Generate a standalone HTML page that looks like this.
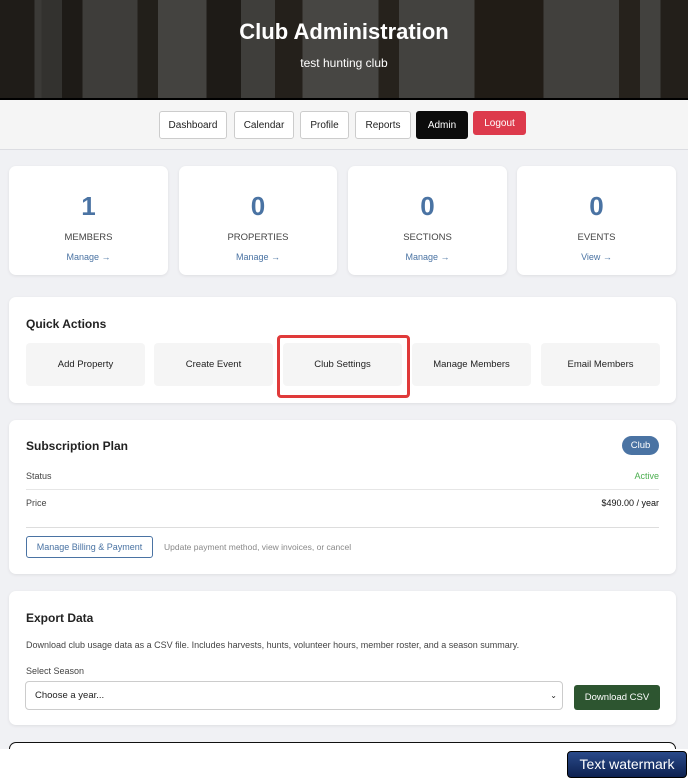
<!DOCTYPE html>
<html><head><meta charset="utf-8"><style>
*{box-sizing:border-box;margin:0;padding:0}
body{width:688px;height:779px;overflow:hidden;background:#f0f1f4;font-family:"Liberation Sans",sans-serif;position:relative;color:#222}
.hdr{position:absolute;left:0;top:0;width:688px;height:98px;background:
linear-gradient(90deg,#1f1c18 0 5%,#3b3a37 5% 6%,#33322f 6% 9%,#1e1b17 9% 12%,#3e3d3a 12% 20%,#221f1a 20% 23%,#444340 23% 30%,#1e1b17 30% 35%,#3f3e3b 35% 40%,#24201b 40% 44%,#474643 44% 55%,#26221c 55% 58%,#43423f 58% 69%,#211c16 69% 79%,#41403d 79% 90%,#26221c 90% 93%,#42413e 93% 96%,#231f1a 96%);}
.hdr h1{position:absolute;z-index:1;top:19px;width:100%;text-align:center;color:#fff;font-size:22px;font-weight:bold}
.hdr p{position:absolute;z-index:1;top:56px;width:100%;text-align:center;color:#fff;font-size:12px}
.line{position:absolute;top:98px;left:0;width:688px;height:2px;background:#000}
.nav{position:absolute;top:100px;left:0;width:688px;height:50px;background:#f5f5f5;border-bottom:1px solid #dcdde2}
.nb{position:absolute;top:11px;height:28px;border:1px solid #ccc;border-radius:3px;background:#fff;font-size:10px;display:flex;align-items:center;justify-content:center;color:#222}
.card{position:absolute;background:#fff;border-radius:7px;box-shadow:0 1px 3px rgba(0,0,0,.08)}
.st{top:166px;width:159px;height:109px;text-align:center}
.st b{display:block;margin-top:25px;font-size:26px;color:#4a73a3}
.st .l{font-size:9.5px;color:#444;margin-top:10px}
.st .m{font-size:9px;color:#4a73a3;margin-top:9px}
.qa{position:absolute;top:46px;height:43px;width:119px;background:#f5f5f5;border-radius:4px;font-size:9.5px;text-align:center;line-height:43px}
h2{font-size:12px;font-weight:bold;position:absolute;left:17px}
.row{position:absolute;left:17px;right:17px;font-size:9px;color:#444}
</style></head><body>
<div class="hdr"><h1>Club Administration</h1><p>test hunting club</p></div>
<div class="line"></div>
<div class="nav">
<div class="nb" style="left:159px;width:68px">Dashboard</div>
<div class="nb" style="left:234px;width:60px">Calendar</div>
<div class="nb" style="left:300px;width:49px">Profile</div>
<div class="nb" style="left:355px;width:56px">Reports</div>
<div class="nb" style="left:416px;width:52px;background:#0b0b0b;border-color:#0b0b0b;color:#fff">Admin</div>
<div class="nb" style="left:473px;top:11px;width:53px;height:24px;background:#dd3a4c;border-color:#dd3a4c;color:#fff">Logout</div>
</div>
<div class="card st" style="left:9px"><b>1</b><div class="l">MEMBERS</div><div class="m">Manage →</div></div>
<div class="card st" style="left:179px;width:158px"><b>0</b><div class="l">PROPERTIES</div><div class="m">Manage →</div></div>
<div class="card st" style="left:348px"><b>0</b><div class="l">SECTIONS</div><div class="m">Manage →</div></div>
<div class="card st" style="left:517px"><b>0</b><div class="l">EVENTS</div><div class="m">View →</div></div>
<div class="card" style="left:9px;top:297px;width:667px;height:106px">
<h2 style="top:20px">Quick Actions</h2>
<div class="qa" style="left:17px">Add Property</div>
<div class="qa" style="left:145px">Create Event</div>
<div class="qa" style="left:274px">Club Settings</div>
<div class="qa" style="left:403px">Manage Members</div>
<div class="qa" style="left:532px">Email Members</div>
</div>
<div style="position:absolute;left:277px;top:335px;width:133px;height:63px;border:3px solid #e03a3a;border-radius:4px"></div>
<div class="card" style="left:9px;top:420px;width:667px;height:154px">
<h2 style="top:19px">Subscription Plan</h2>
<div style="position:absolute;right:17px;top:16px;width:37px;height:19px;border-radius:10px;background:#4a73a3;color:#fff;font-size:9.5px;line-height:19px;text-align:center">Club</div>
<div class="row" style="top:51px">Status<span style="float:right;color:#4caf50">Active</span></div>
<div class="row" style="top:69px;border-top:1px solid #e6e6e6;height:1px"></div>
<div class="row" style="top:78px">Price<span style="float:right;color:#111">$490.00 / year</span></div>
<div class="row" style="top:107px;border-top:1px solid #ddd;height:1px"></div>
<div style="position:absolute;left:17px;top:116px;width:127px;height:22px;border:1px solid #4a73a3;border-radius:3px;color:#4a73a3;font-size:9px;line-height:20px;text-align:center">Manage Billing &amp; Payment</div>
<div style="position:absolute;left:155px;top:122px;font-size:8.5px;color:#888">Update payment method, view invoices, or cancel</div>
</div>
<div class="card" style="left:9px;top:591px;width:667px;height:134px">
<h2 style="top:20px">Export Data</h2>
<div class="row" style="top:49px">Download club usage data as a CSV file. Includes harvests, hunts, volunteer hours, member roster, and a season summary.</div>
<div class="row" style="top:75px">Select Season</div>
<div style="position:absolute;left:16px;top:90px;width:538px;height:29px;border:1px solid #ccc;border-radius:4px;font-size:9.5px;line-height:27px;padding-left:9px">Choose a year...<span style="position:absolute;right:5px;font-size:8px">⌄</span></div>
<div style="position:absolute;left:565px;top:94px;width:86px;height:25px;background:#2d5530;border-radius:3px;color:#fff;font-size:9.5px;line-height:25px;text-align:center">Download CSV</div>
</div>
<div style="position:absolute;left:9px;top:742px;width:667px;height:20px;border:1.5px solid #111;border-bottom:none;border-radius:7px 7px 0 0;background:#fff"></div>
<div style="position:absolute;left:0;top:749px;width:688px;height:30px;background:#fff"></div>
<div style="position:absolute;left:567px;top:751px;width:120px;height:27px;background:linear-gradient(#2a4a8a,#0d2150);border:1px solid #000;border-radius:4px;color:#fff;font-size:14px;line-height:25px;text-align:center">Text watermark</div>
</body></html>
